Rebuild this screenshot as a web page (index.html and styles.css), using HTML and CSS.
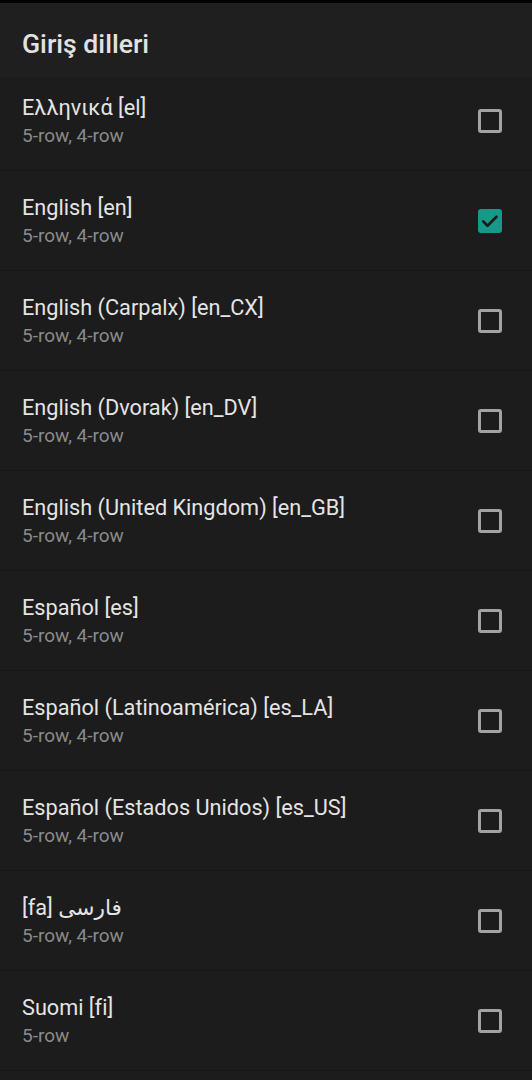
FILE: index.html
```html
<!DOCTYPE html>
<html lang="tr">
<head>
    <meta charset="UTF-8">
    <meta name="viewport" content="width=device-width, initial-scale=1.0">
    <title>Giriş dilleri</title>
    <link rel="stylesheet" href="styles.css">
</head>
<body>
    <div class="statusbar"></div>
    <div class="appbar">
        <h1>Giriş dilleri</h1>
    </div>
    <ul class="lang-list">
        <li class="row">
            <div class="text">
                <span class="title">Ελληνικά [el]</span>
                <span class="summary">5-row, 4-row</span>
            </div>
            <span class="checkbox"></span>
        </li>
        <li class="row">
            <div class="text">
                <span class="title">English [en]</span>
                <span class="summary">5-row, 4-row</span>
            </div>
            <span class="checkbox checked">
                <svg viewBox="0 0 24 24" width="24" height="24"><path d="M5.2 12.4l4.3 4.3 9-9" fill="none" stroke="#1a1a1a" stroke-width="2.7" stroke-linecap="round" stroke-linejoin="round"/></svg>
            </span>
        </li>
        <li class="row">
            <div class="text">
                <span class="title">English (Carpalx) [en_CX]</span>
                <span class="summary">5-row, 4-row</span>
            </div>
            <span class="checkbox"></span>
        </li>
        <li class="row">
            <div class="text">
                <span class="title">English (Dvorak) [en_DV]</span>
                <span class="summary">5-row, 4-row</span>
            </div>
            <span class="checkbox"></span>
        </li>
        <li class="row">
            <div class="text">
                <span class="title">English (United Kingdom) [en_GB]</span>
                <span class="summary">5-row, 4-row</span>
            </div>
            <span class="checkbox"></span>
        </li>
        <li class="row">
            <div class="text">
                <span class="title">Español [es]</span>
                <span class="summary">5-row, 4-row</span>
            </div>
            <span class="checkbox"></span>
        </li>
        <li class="row">
            <div class="text">
                <span class="title">Español (Latinoamérica) [es_LA]</span>
                <span class="summary">5-row, 4-row</span>
            </div>
            <span class="checkbox"></span>
        </li>
        <li class="row">
            <div class="text">
                <span class="title">Español (Estados Unidos) [es_US]</span>
                <span class="summary">5-row, 4-row</span>
            </div>
            <span class="checkbox"></span>
        </li>
        <li class="row">
            <div class="text">
                <span class="title" dir="ltr">[fa] فارسی</span>
                <span class="summary">5-row, 4-row</span>
            </div>
            <span class="checkbox"></span>
        </li>
        <li class="row">
            <div class="text">
                <span class="title">Suomi [fi]</span>
                <span class="summary">5-row</span>
            </div>
            <span class="checkbox"></span>
        </li>
    </ul>
</body>
</html>
```

FILE: styles.css
```css
html, body {
    height: 100%;
    overflow: hidden;
}
body {
    font-family: Roboto, "Noto Sans", "DejaVu Sans", sans-serif;
    background-color: #1c1c1c;
    margin: 0;
    padding: 0;
}
.statusbar {
    height: 3px;
    background-color: #000;
}
.appbar {
    position: relative;
    z-index: 1;
    height: 74px;
    box-sizing: border-box;
    padding: 25px 22px 0;
    background-color: #1f1f1f;
}
.appbar h1 {
    margin: 0;
    font-size: 26.6px;
    line-height: 32px;
    font-weight: 500;
    color: #e2e2e2;
}
.lang-list {
    list-style: none;
    margin: -6px 0 0;
    padding: 0;
}
.row {
    display: flex;
    align-items: center;
    height: 99px;
    padding: 0 30px 0 22px;
    border-bottom: 1px solid #171717;
}
.text {
    flex: 1;
    display: flex;
    flex-direction: column;
    gap: 4px;
}
.title {
    font-size: 21.7px;
    line-height: 26px;
    color: #e4e4e4;
}
.summary {
    font-size: 19px;
    line-height: 22px;
    color: #8a8a8a;
}
.checkbox {
    width: 24px;
    height: 24px;
    box-sizing: border-box;
    border: 3px solid #a3a3a3;
    border-radius: 3px;
}
.checkbox.checked {
    border: none;
    background-color: #17998a;
}
.checkbox svg {
    display: block;
}
```
